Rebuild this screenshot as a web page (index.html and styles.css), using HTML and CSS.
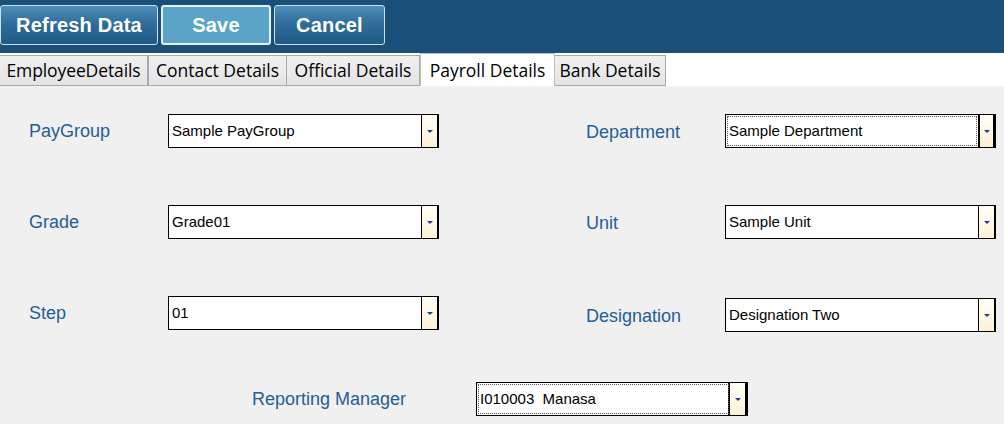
FILE: index.html
```html
<!DOCTYPE html>
<html>
<head>
<meta charset="utf-8">
<link rel="stylesheet" href="styles.css">
</head>
<body>
<div class="toolbar">
  <button class="tb-btn refresh">Refresh Data</button>
  <button class="tb-btn save">Save</button>
  <button class="tb-btn cancel">Cancel</button>
</div>
<div class="tabs">
  <div class="tab t1">EmployeeDetails</div>
  <div class="tab t2">Contact Details</div>
  <div class="tab t3">Official Details</div>
  <div class="tab t4 active">Payroll Details</div>
  <div class="tab t5">Bank Details</div>
</div>
<div class="content">
  <div class="grid">
    <div class="field"><span class="lbl">PayGroup</span><div class="combo"><span class="val">Sample PayGroup</span><span class="drop"><span class="arrow"></span></span></div></div>
    <div class="field right"><span class="lbl">Department</span><div class="combo focused"><span class="val">Sample Department</span><span class="drop"><span class="arrow"></span></span></div></div>
    <div class="field"><span class="lbl">Grade</span><div class="combo"><span class="val">Grade01</span><span class="drop"><span class="arrow"></span></span></div></div>
    <div class="field right"><span class="lbl">Unit</span><div class="combo"><span class="val">Sample Unit</span><span class="drop"><span class="arrow"></span></span></div></div>
    <div class="field"><span class="lbl">Step</span><div class="combo"><span class="val">01</span><span class="drop"><span class="arrow"></span></span></div></div>
    <div class="field right down"><span class="lbl">Designation</span><div class="combo"><span class="val">Designation Two</span><span class="drop"><span class="arrow"></span></span></div></div>
  </div>
  <div class="field manager"><span class="lbl">Reporting Manager</span><div class="combo focused"><span class="val">I010003&nbsp; Manasa</span><span class="drop"><span class="arrow"></span></span></div></div>
</div>
</body>
</html>
```
FILE: styles.css
```css
html, body {
  margin: 0;
  padding: 0;
}
body {
  width: 1004px;
  height: 424px;
  overflow: hidden;
  background: #f0f0f0;
  font-family: "Liberation Sans", Arial, sans-serif;
}
.toolbar {
  height: 53px;
  background: #1a4f79;
  display: flex;
  align-items: flex-start;
  padding-top: 5px;
  box-sizing: border-box;
  gap: 3px;
}
.tb-btn {
  height: 40px;
  margin: 0;
  padding: 0;
  border: 1px solid #cfe0ee;
  border-radius: 3px;
  background: linear-gradient(#4f90bb 0%, #2f6d9a 45%, #1f5a87 100%);
  color: #fff;
  font-family: "Liberation Sans", Arial, sans-serif;
  font-weight: bold;
  font-size: 20px;
  letter-spacing: 0.2px;
  text-align: center;
}
.tb-btn.refresh { width: 158px; }
.tb-btn.save {
  width: 110px;
  background: #5aa5c7;
  border: 2px solid #e6f0f6;
}
.tb-btn.cancel { width: 111px; }

.tabs {
  height: 33px;
  background: #fff;
  display: flex;
  align-items: flex-start;
}
.tab {
  box-sizing: border-box;
  height: 31px;
  margin-top: 2px;
  border: 1px solid #a9a9a9;
  background: linear-gradient(#f0f0f0, #e4e4e4);
  font-family: "Open Sans", "Noto Sans", sans-serif;
  font-size: 17.5px;
  line-height: 29px;
  color: #000;
  text-align: center;
  white-space: nowrap;
}
.tab.t1 { width: 148px; border-left: none; letter-spacing: -0.1px; }
.tab.t2 { width: 139px; }
.tab.t3 { width: 133px; border-left: none; }
.tab.t4 { width: 135px; }
.tab.t5 { width: 111px; border-left: none; }
.tab.active {
  height: 33px;
  margin-top: 0;
  background: #fff;
  border-bottom: none;
  line-height: 32px;
  border-color: #c0c0c0;
}

.content {
  padding: 28px 0 0 29px;
}
.grid {
  display: grid;
  grid-template-columns: 410px 410px;
  column-gap: 147px;
  row-gap: 57px;
}
.field {
  display: flex;
  align-items: center;
  height: 34px;
}
.field.down { margin-top: 2px; }
.lbl {
  width: 139px;
  flex: none;
  font-size: 18px;
  color: #245e97;
}
.field.right .lbl { padding-top: 3px; }
.combo {
  box-sizing: border-box;
  width: 271px;
  height: 34px;
  border: 1px solid #000;
  background: #fff;
  display: flex;
  position: relative;
}
.combo.focused::before {
  content: "";
  position: absolute;
  left: 1px;
  top: 1px;
  bottom: 1px;
  right: 18px;
  border: 1px dotted #555;
}
.val {
  flex: 1;
  padding-left: 3px;
  font-size: 15px;
  line-height: 32px;
  color: #000;
  white-space: nowrap;
}
.drop {
  width: 17px;
  flex: none;
  box-sizing: border-box;
  border-left: 1px solid #000;
  border-right: 1px solid #000;
  background: linear-gradient(#fffff6, #fdf1d6);
  display: flex;
  align-items: center;
  justify-content: center;
}
.combo.focused .drop {
  border-left-width: 2px;
  border-right-width: 2px;
}
.arrow {
  width: 0;
  height: 0;
  border-left: 3px solid transparent;
  border-right: 3px solid transparent;
  border-top: 3px solid #1d3f8a;
}
.field.manager {
  margin-top: 50px;
  margin-left: 223px;
}
.field.manager .lbl { width: 224px; }
.field.manager .combo { width: 272px; }
.field.manager .drop { width: 19px; }
```
